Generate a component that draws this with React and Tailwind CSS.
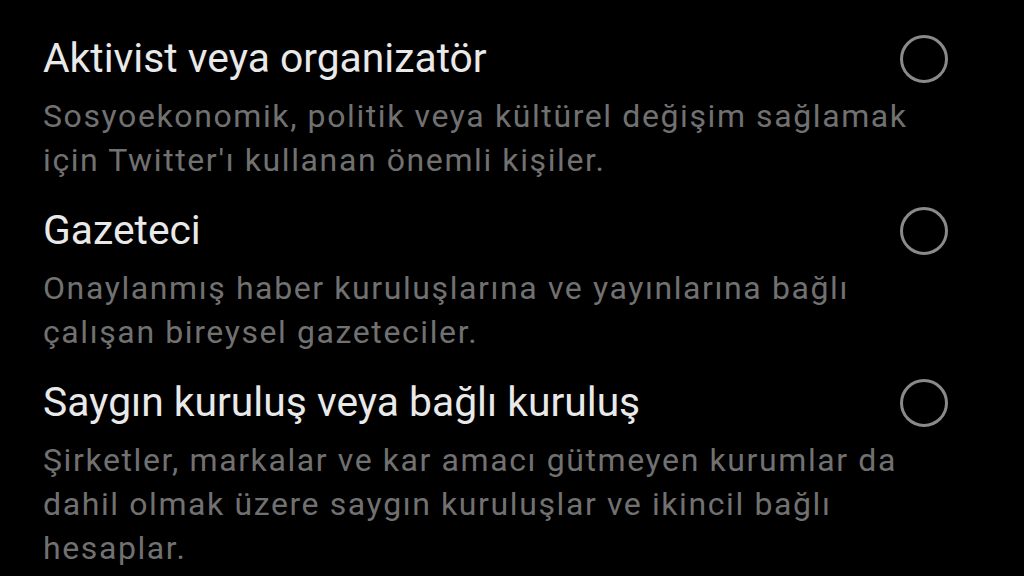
import React from "react";

const items = [
  {
    title: "Aktivist veya organizatör",
    desc: ["Sosyoekonomik, politik veya kültürel değişim sağlamak", "için Twitter'ı kullanan önemli kişiler."],
  },
  {
    title: "Gazeteci",
    desc: ["Onaylanmış haber kuruluşlarına ve yayınlarına bağlı", "çalışan bireysel gazeteciler."],
  },
  {
    title: "Saygın kuruluş veya bağlı kuruluş",
    desc: [
      "Şirketler, markalar ve kar amacı gütmeyen kurumlar da",
      "dahil olmak üzere saygın kuruluşlar ve ikincil bağlı",
      "hesaplar.",
    ],
  },
];

export default function App() {
  return (
    <div className="w-[1024px] h-[576px] overflow-hidden bg-black pt-[36px] pl-[43px] pr-[76px]">
      <div className="flex flex-col gap-[26px]">
        {items.map((it) => (
          <div key={it.title} className="flex items-start justify-between">
            <div className="flex flex-1 min-w-0 flex-col gap-[14px]">
              <div className="font-['Roboto',sans-serif] text-[40.8px] leading-[44px] text-[#e9e9e9] whitespace-nowrap">
                {it.title}
              </div>
              <div className="font-['Roboto',sans-serif] text-[32px] leading-[44px] tracking-[1.6px] text-[#717171] whitespace-nowrap">
                {it.desc.map((l) => (
                  <div key={l}>{l}</div>
                ))}
              </div>
            </div>
            <div className="mt-[-1px] w-[48px] h-[48px] rounded-full border-[3px] border-[#8a8a8a] shrink-0" />
          </div>
        ))}
      </div>
    </div>
  );
}
